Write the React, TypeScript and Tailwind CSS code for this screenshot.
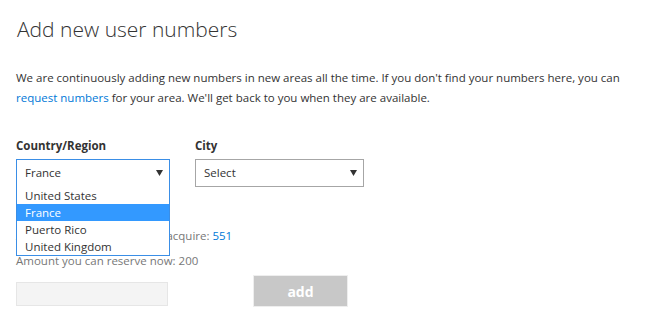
import React from 'react';

const countries = ['United States', 'France', 'Puerto Rico', 'United Kingdom'];

function Caret() {
  return (
    <svg width="7" height="6" viewBox="0 0 7 6" className="shrink-0">
      <path d="M0 0h7L3.5 6z" fill="#333" />
    </svg>
  );
}

export default function App() {
  const selected = 'France';

  return (
    <div className="w-[647px] h-[318px] bg-white text-[#333] overflow-hidden font-['Open_Sans',sans-serif]">
      <div className="px-4 pt-[14px]">
        {/* Title */}
        <h1 className="text-[21px] font-light leading-[30px] pl-px">Add new user numbers</h1>

        {/* Intro */}
        <p className="mt-[24px] text-[11.5px] leading-[20px] w-[620px]">
          We are continuously adding new numbers in new areas all the time. If you don't find your numbers here, you can{' '}
          <a className="text-[#0078d7]">request numbers</a> for your area. We'll get back to you when they are available.
        </p>

        {/* Selectors */}
        <div className="mt-[30px] flex gap-[25px]">
          <div className="w-[154px] relative">
            <div className="text-[11.5px] font-bold leading-[16px] h-[21px]">Country/Region</div>
            <div className="h-[28px] border border-[#3a8ee6] flex items-center justify-between pl-2 pr-[6px] text-[11.5px]">
              <span>{selected}</span>
              <Caret />
            </div>
            {/* Open dropdown list */}
            <div className="absolute left-0 top-[48px] w-[154px] bg-white border border-[#3a8ee6] border-t-0 z-10 pt-px">
              {countries.map((c) => (
                <div
                  key={c}
                  className={
                    c === selected
                      ? 'h-[17px] leading-[17px] pl-2 text-[11.5px] bg-[#3399ff] text-white'
                      : 'h-[17px] leading-[17px] pl-2 text-[11.5px]'
                  }
                >
                  {c}
                </div>
              ))}
            </div>
          </div>
          <div className="w-[169px]">
            <div className="text-[11.5px] font-bold leading-[16px] h-[21px]">City</div>
            <div className="h-[28px] border border-[#a6a6a6] flex items-center justify-between pl-2 pr-[6px] text-[11.5px]">
              <span>Select</span>
              <Caret />
            </div>
          </div>
        </div>

        {/* Amounts */}
        <div className="mt-[39px] text-[11.5px] text-[#777]">
          <div className="leading-[20px]">
            Amount of number you can acquire: <span className="text-[#0078d7]">551</span>
          </div>
          <div className="leading-[20px] mt-[5px]">Amount you can reserve now: 200</div>
        </div>

        {/* Input and button */}
        <div className="mt-[4px] flex items-start">
          <input className="mt-[7px] w-[152px] h-[24px] bg-[#f4f4f4] border border-[#e6e6e6] outline-none" />
          <button className="ml-[85px] w-[95px] h-[32px] bg-[#c8c8c8] border border-[#eeeeee] text-white font-bold text-[14px]">
            add
          </button>
        </div>
      </div>
    </div>
  );
}
